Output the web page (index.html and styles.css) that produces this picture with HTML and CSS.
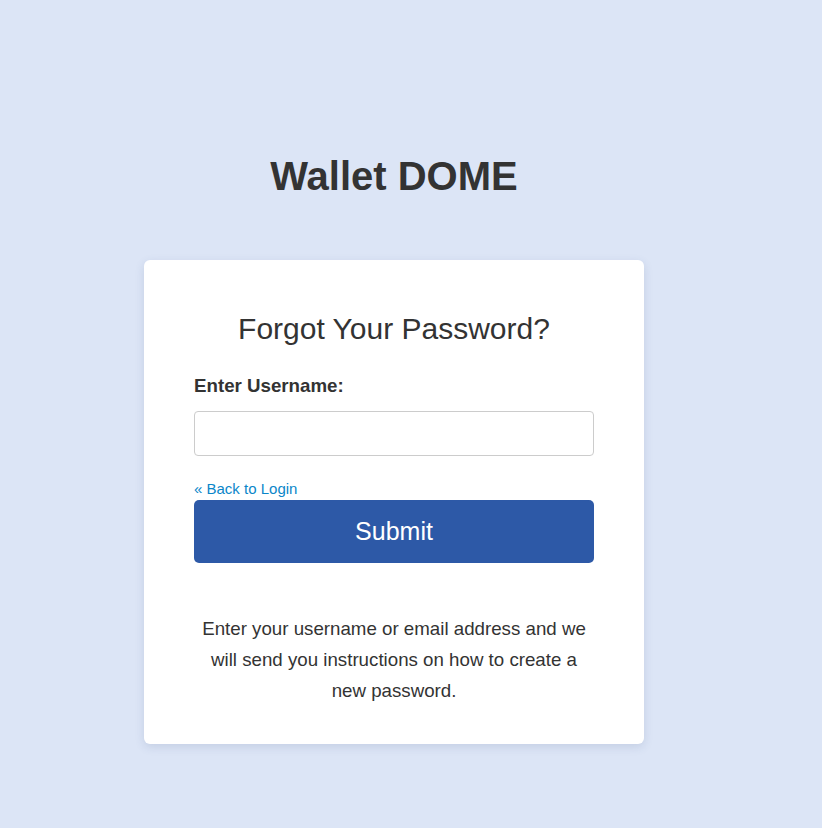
FILE: index.html
```html
<!DOCTYPE html>
<html lang="en">
<head>
<meta charset="utf-8">
<title>Wallet DOME - Forgot Password</title>
<link rel="stylesheet" href="styles.css">
</head>
<body>
<main class="page">
  <h1 class="brand">Wallet DOME</h1>
  <section class="card">
    <h2 class="card-title">Forgot Your Password?</h2>
    <form class="form">
      <label class="label" for="username">Enter Username:</label>
      <input class="input" id="username" type="text">
      <a class="back-link" href="#">« Back to Login</a>
      <button class="submit" type="button">Submit</button>
    </form>
    <p class="info">Enter your username or email address and we will send you instructions on how to create a new password.</p>
  </section>
</main>
</body>
</html>
```
FILE: styles.css
```css
html, body {
  margin: 0;
  padding: 0;
}
body {
  background: #dce5f6;
  font-family: "Liberation Sans", Arial, sans-serif;
  color: #333333;
  min-height: 828px;
}
.page {
  width: 788px;
  display: flex;
  flex-direction: column;
  align-items: center;
  padding-top: 153px;
}
.brand {
  margin: 0;
  font-size: 40px;
  line-height: 46px;
  font-weight: bold;
  color: #333333;
}
.card {
  margin-top: 61px;
  width: 500px;
  box-sizing: border-box;
  background: #ffffff;
  border-radius: 6px;
  box-shadow: 0 3px 10px rgba(60, 80, 130, 0.15);
  padding: 51px 50px 38px;
}
.card-title {
  margin: 0;
  font-size: 30px;
  line-height: 36px;
  font-weight: normal;
  text-align: center;
  color: #333333;
}
.form {
  display: flex;
  flex-direction: column;
  margin-top: 28px;
}
.label {
  font-size: 18.72px;
  line-height: 22px;
  font-weight: bold;
  color: #333333;
}
.input {
  margin-top: 14px;
  height: 45px;
  box-sizing: border-box;
  border: 1px solid #cccccc;
  border-radius: 4px;
  padding: 6px 12px;
  font-size: 16px;
  font-family: inherit;
}
.back-link {
  margin-top: 24px;
  font-size: 15px;
  line-height: 18px;
  color: #0a86c9;
  text-decoration: none;
  align-self: flex-start;
}
.submit {
  margin-top: 2px;
  height: 63px;
  border: none;
  border-radius: 5px;
  background: #2d59a7;
  color: #ffffff;
  font-family: inherit;
  font-size: 25px;
}
.info {
  margin: 50px 0 0;
  font-size: 18.72px;
  line-height: 31px;
  text-align: center;
  color: #333333;
}
```
